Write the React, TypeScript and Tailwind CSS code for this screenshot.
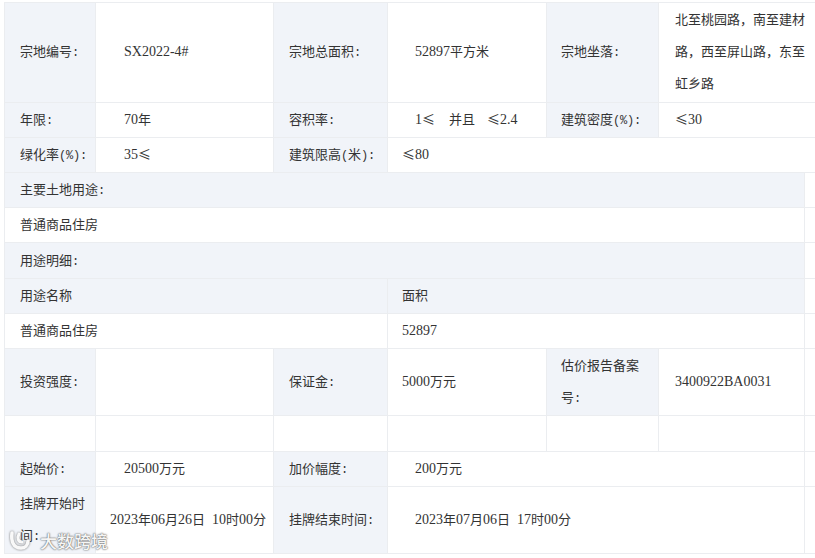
import React from "react";

const M = ({ children }: { children: React.ReactNode }) => (
  <span className="font-['Liberation_Serif'] text-[14px] leading-none">{children}</span>
);

// half-width glyph cell, 7px wide
const H = ({ children }: { children?: React.ReactNode }) => (
  <span className="inline-block w-[7px] text-center font-['Liberation_Mono'] text-[12px] leading-none">{children}</span>
);

const C = () => <H>:</H>;

const L = ({ children, span, pl = "pl-[15px]" }: { children?: React.ReactNode; span?: number; pl?: string }) => (
  <td colSpan={span} className={`border border-[#ebedf0] bg-[#f1f4f9] ${pl} pr-[8px] pt-0 pb-[2px] align-middle`}>
    {children}
  </td>
);

const V = ({ children, span, pl = "pl-[15px]", nowrap }: { children?: React.ReactNode; span?: number; pl?: string; nowrap?: boolean }) => (
  <td colSpan={span} className={`border border-[#ebedf0] bg-white ${pl} pr-[8px] pt-0 pb-[2px] align-middle ${nowrap ? "whitespace-nowrap" : ""}`}>
    {children}
  </td>
);

export default function App() {
  return (
    <div className="relative w-[815px] h-[558px] overflow-hidden bg-white pl-[4px] pt-[2px] font-['Noto_Sans_CJK_SC',sans-serif] text-[13px] leading-[32px] text-[#333]">
      <table className="w-[826px] table-fixed border-collapse">
        <colgroup>
          <col className="w-[91px]" />
          <col className="w-[178px]" />
          <col className="w-[114px]" />
          <col className="w-[159px]" />
          <col className="w-[112px]" />
          <col className="w-[146px]" />
          <col className="w-[26px]" />
        </colgroup>
        <tbody>
          <tr className="h-[100px] [&>td]:pb-[3px]">
            <L>宗地编号<C /></L>
            <V pl="pl-[28px]"><M>SX2022-4#</M></V>
            <L>宗地总面积<C /></L>
            <V pl="pl-[27px]"><M>52897</M>平方米</V>
            <L pl="pl-[14px]">宗地坐落<C /></L>
            <V span={2} pl="pl-[16px]">
              <div className="w-[131px]">{"北至桃园路\uff0c南至建材路\uff0c西至屏山路\uff0c东至虹乡路"}</div>
            </V>
          </tr>
          <tr className="h-[35px]">
            <L>年限<C /></L>
            <V pl="pl-[28px]"><M>70</M>年</V>
            <L>容积率<C /></L>
            <V pl="pl-[27px]"><M>1</M>≤<span className="ml-[14px]">并且</span><span className="ml-[12px]">≤</span><M>2.4</M></V>
            <L pl="pl-[14px]">建筑密度<H>(</H><H>%</H><H>)</H><C /></L>
            <V span={2} pl="pl-[16px]">≤<M>30</M></V>
          </tr>
          <tr className="h-[35px]">
            <L>绿化率<H>(</H><H>%</H><H>)</H><C /></L>
            <V pl="pl-[28px]"><M>35</M>≤</V>
            <L>建筑限高<H>(</H>米<H>)</H><C /></L>
            <V span={4} pl="pl-[14px]">≤<M>80</M></V>
          </tr>
          <tr className="h-[35px]">
            <L span={6}>主要土地用途<C /></L>
            <V />
          </tr>
          <tr className="h-[35px]">
            <V span={6}>普通商品住房</V>
            <V />
          </tr>
          <tr className="h-[36px]">
            <L span={6}>用途明细<C /></L>
            <V />
          </tr>
          <tr className="h-[35px]">
            <L span={3}>用途名称</L>
            <L span={3} pl="pl-[14px]">面积</L>
            <V />
          </tr>
          <tr className="h-[35px]">
            <V span={3}>普通商品住房</V>
            <V span={3} pl="pl-[14px]"><M>52897</M></V>
            <V />
          </tr>
          <tr className="h-[67px]">
            <L>投资强度<C /></L>
            <V />
            <L>保证金<C /></L>
            <V pl="pl-[14px]"><M>5000</M>万元</V>
            <L pl="pl-[14px]">估价报告备案号<C /></L>
            <V pl="pl-[16px]"><M>3400922BA0031</M></V>
            <V />
          </tr>
          <tr className="h-[36px]">
            <V />
            <V />
            <V />
            <V />
            <V />
            <V />
            <V />
          </tr>
          <tr className="h-[35px]">
            <L>起始价<C /></L>
            <V pl="pl-[28px]"><M>20500</M>万元</V>
            <L>加价幅度<C /></L>
            <V span={3} pl="pl-[27px]"><M>200</M>万元</V>
            <V />
          </tr>
          <tr className="h-[67px]">
            <L>挂牌开始时间<C /></L>
            <V pl="pl-[14px]" nowrap>
              <M>2023</M>年<M>06</M>月<M>26</M>日<H /><M>10</M>时<M>00</M>分
            </V>
            <L>挂牌结束时间<C /></L>
            <V span={3} pl="pl-[27px]">
              <M>2023</M>年<M>07</M>月<M>06</M>日<H /><M>17</M>时<M>00</M>分
            </V>
            <V />
          </tr>
        </tbody>
      </table>

      <div className="absolute left-[8px] top-[530px] flex items-center gap-[8px] text-[#fffffff0] [text-shadow:0_0_2px_#666,0_0_1px_#666]">
        <svg width="24" height="22" viewBox="0 0 24 22" fill="none" className="drop-shadow-[0_0_1px_#666]">
          <path d="M4 3 C3 11 5 18 13 18 C17 18 20 15 20 11" stroke="#fff" strokeOpacity="0.95" strokeWidth="3.5" strokeLinecap="round" />
          <path d="M11 4 C9 8 10 12 14 12" stroke="#fff" strokeOpacity="0.95" strokeWidth="3" strokeLinecap="round" />
        </svg>
        <span className="text-[17px] leading-[22px] font-medium">大数跨境</span>
      </div>
    </div>
  );
}
